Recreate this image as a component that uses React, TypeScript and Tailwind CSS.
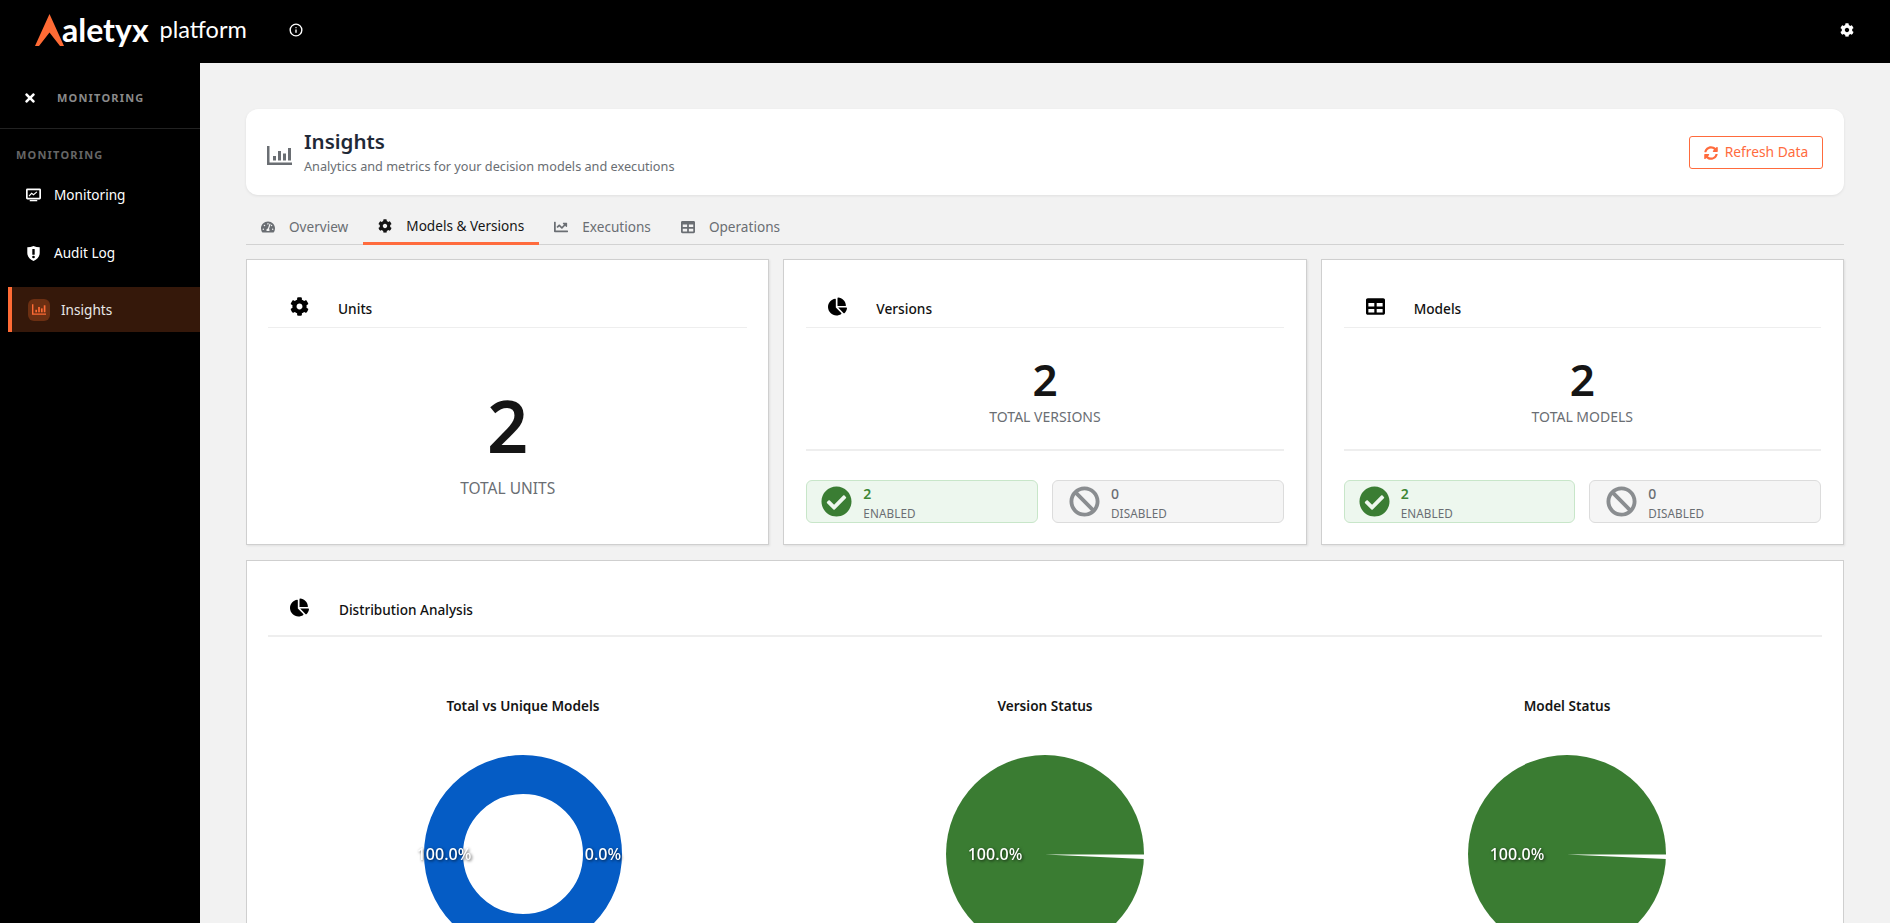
import { FaTimes, FaCog, FaTachometerAlt, FaChartLine, FaTable, FaChartPie, FaCheckCircle, FaBan, FaSyncAlt } from "react-icons/fa";
import { Info } from "lucide-react";

function BarsIcon({ className }: { className?: string }) {
  return (
    <svg viewBox="0 0 25 19" className={className} fill="currentColor">
      <path d="M0 0h2.5v16.5H25V19H0z" />
      <rect x="6" y="10" width="3" height="4.5" />
      <rect x="11" y="5" width="3" height="9.5" />
      <rect x="16" y="7.5" width="3" height="7" />
      <rect x="21" y="2" width="3" height="12.5" />
    </svg>
  );
}

function MonitorIcon({ className }: { className?: string }) {
  return (
    <svg viewBox="0 0 16 14" className={className} fill="none" stroke="currentColor">
      <rect x="0.9" y="0.9" width="14.2" height="10" rx="0.6" strokeWidth="1.8" />
      <path d="M3.2 8.2l2.8-3 2 1.5 3.6-3" strokeWidth="1.2" />
      <path d="M4 13h8" strokeWidth="1.4" />
    </svg>
  );
}

function ShieldIcon({ className }: { className?: string }) {
  return (
    <svg viewBox="0 0 13 15" className={className}>
      <path d="M0.3 1.2C2.5 1.2 4.6 0.8 6.5 0C8.4 0.8 10.5 1.2 12.7 1.2V7C12.7 10.8 10 13.6 6.5 15C3 13.6 0.3 10.8 0.3 7z" fill="currentColor" />
      <rect x="5.3" y="3" width="2.4" height="5.8" rx="0.4" fill="#000000" />
      <circle cx="6.5" cy="11" r="1.35" fill="#000000" />
    </svg>
  );
}

function LogoMark() {
  return (
    <svg viewBox="0 0 29 32" className="h-[32px] w-[29px]">
      <path d="M14.5 0L29 32H25L14.5 18.5L4 32H0z" fill="#ff6b35" />
    </svg>
  );
}

function CardHeader({ icon, title }: { icon: React.ReactNode; title: string }) {
  return (
    <div className="flex h-[46px] border-b border-[#eeeeee] pl-[22px]">
      <div className="w-[19px] pt-[15px] text-[19px] text-black">{icon}</div>
      <div className="ml-[29px] pt-[18px] text-[13.7px] leading-[18px] font-medium text-[#111111]">{title}</div>
    </div>
  );
}

function StatusCard({ value, label, enabled }: { value: number; label: string; enabled: boolean }) {
  return (
    <div
      className={
        enabled
          ? "flex h-[43px] items-center gap-[11px] rounded-md border border-[#c8e6c9] bg-[#edf7ee] pl-[14px]"
          : "flex h-[43px] items-center gap-[11px] rounded-md border border-[#dcdcdc] bg-[#f5f5f5] pl-[16px]"
      }
    >
      {enabled ? (
        <FaCheckCircle className="text-[31px] text-[#3a7d33]" />
      ) : (
        <FaBan className="text-[31px] text-[#8a8d90]" />
      )}
      <div className="flex flex-col pt-[3px]">
        <span className={enabled ? "text-[14px] leading-[18px] font-semibold text-[#3e8635]" : "text-[14px] leading-[18px] font-medium text-[#6a6e73]"}>
          {value}
        </span>
        <span className="mt-[3px] text-[11.7px] leading-[15px] tracking-[0.1px] text-[#6a6e73]">{label}</span>
      </div>
    </div>
  );
}

function SplitCard({ icon, title, label }: { icon: React.ReactNode; title: string; label: string }) {
  return (
    <div className="h-[286px] border border-[#cfcfcf] bg-white px-[22px] pt-[22px] shadow-[1px_1px_2px_rgba(0,0,0,0.08)]">
      <CardHeader icon={icon} title={title} />
      <div className="flex flex-col items-center border-b-2 border-[#eeeeee] pt-[27px] pb-[22px]">
        <div className="text-[44px] leading-[48px] font-semibold text-[#151515]">2</div>
        <div className="mt-[4px] text-[14px] leading-[20px] text-[#6a6e73]">{label}</div>
      </div>
      <div className="mt-[29px] grid grid-cols-2 gap-[14px]">
        <StatusCard value={2} label="ENABLED" enabled />
        <StatusCard value={0} label="DISABLED" enabled={false} />
      </div>
    </div>
  );
}

const TABS = [
  { label: "Overview", icon: FaTachometerAlt },
  { label: "Models & Versions", icon: FaCog, active: true },
  { label: "Executions", icon: FaChartLine },
  { label: "Operations", icon: FaTable }
];

function PieLabel({ x, children }: { x: number; children: string }) {
  return (
    <text
      x={x}
      y={105}
      textAnchor="middle"
      fill="#ffffff"
      className="text-[16px] font-medium drop-shadow-[1px_1px_1.5px_rgba(0,0,0,0.7)]"
    >
      {children}
    </text>
  );
}

function ChartColumn({ title, children }: { title: string; children: React.ReactNode }) {
  return (
    <div className="flex flex-col items-center">
      <div className="text-[13.6px] leading-[20px] font-semibold text-[#151515]">{title}</div>
      <svg viewBox="0 0 510 200" className="mt-[39px] h-[200px] w-[510px]">
        {children}
      </svg>
    </div>
  );
}

function StatusPie({ title }: { title: string }) {
  return (
    <ChartColumn title={title}>
      <circle cx="255" cy="99" r="99" fill="#3a7c32" />
      <path d="M255 99.5L354 99.5L354 104z" fill="#ffffff" />
      <PieLabel x={205}>100.0%</PieLabel>
    </ChartColumn>
  );
}

export default function App() {
  return (
    <div className="flex h-screen flex-col overflow-hidden bg-black [font-family:'Noto_Sans',sans-serif]">
      <header className="flex h-[63px] shrink-0 items-center justify-between bg-black pr-[36px] pb-[4px] pl-[35px] text-white">
        <div className="flex items-center">
          <LogoMark />
          <span className="-ml-[2px] text-[32px] leading-none font-bold [font-family:Lato,sans-serif]">aletyx</span>
          <span className="ml-[11px] text-[23.5px] leading-none font-normal [font-family:Lato,sans-serif]">platform</span>
          <Info className="ml-[42px] h-[14px] w-[14px]" strokeWidth={2.4} />
        </div>
        <FaCog className="text-[14px]" />
      </header>

      <div className="flex min-h-0 flex-1">
        <aside className="w-[200px] shrink-0 bg-black text-white">
          <div className="flex h-[66px] items-center border-b border-[#222222] pt-[5px] pl-[23px]">
            <FaTimes className="text-[14px]" />
            <span className="ml-[20px] text-[11px] font-bold tracking-[1.2px] text-[#8a8a8a]">MONITORING</span>
          </div>
          <div className="pt-[18px] pl-[16px] text-[11px] leading-[16px] font-bold tracking-[1.2px] text-[#666666]">MONITORING</div>
          <nav className="mt-[8px] flex flex-col gap-3 pl-[8px] text-[13.6px]">
            <div className="flex h-[46px] items-center pt-[2px] pl-[18px]">
              <MonitorIcon className="h-[14px] w-[15px]" />
              <span className="ml-[13px]">Monitoring</span>
            </div>
            <div className="flex h-[46px] items-center pt-[2px] pl-[19px]">
              <ShieldIcon className="h-[15px] w-[13px]" />
              <span className="ml-[14px]">Audit Log</span>
            </div>
            <div className="flex h-[45px] items-center border-l-4 border-[#ff6b35] bg-[#35180a] pl-[16px]">
              <div className="flex h-[22px] w-[22px] items-center justify-center rounded-md bg-[#6b2f12]">
                <BarsIcon className="h-[11px] w-[14px] text-[#ff6b35]" />
              </div>
              <span className="ml-[11px] pt-[2px] text-[#e8e8e8]">Insights</span>
            </div>
          </nav>
        </aside>

        <main className="min-w-0 flex-1 overflow-hidden bg-[#f2f2f2] px-[46px] pt-[46px]">
          <section className="flex h-[86px] items-center justify-between rounded-xl bg-white pr-[21px] pl-[21px] shadow-[0_1px_3px_rgba(0,0,0,0.08)]">
            <div className="flex items-center pb-[2px]">
              <BarsIcon className="mt-[8px] h-[19px] w-[25px] text-[#6a6e73]" />
              <div className="ml-[12px]">
                <h1 className="text-[20.5px] leading-[28px] font-semibold text-[#1f2937]">Insights</h1>
                <p className="mt-[1px] text-[12.7px] leading-[20px] text-[#6a6e73]">Analytics and metrics for your decision models and executions</p>
              </div>
            </div>
            <button className="flex h-[33px] w-[134px] items-center justify-center gap-[7px] rounded-[3px] border border-[#ff6b3d] pt-[1px] text-[13.8px] text-[#ff6b3d]">
              <FaSyncAlt className="text-[14px]" />
              Refresh Data
            </button>
          </section>

          <div className="mt-[13px] flex h-[37px] border-b border-[#d2d2d2] text-[13.6px]">
            {TABS.map((tab) => {
              const Icon = tab.icon;
              return (
                <div
                  key={tab.label}
                  className={
                    tab.active
                      ? "-mb-px flex items-center gap-[14px] border-b-[3px] border-[#ff6b3d] px-[15px] pt-[2px] text-[#151515]"
                      : "flex items-center gap-[14px] px-[15px] pt-[2px] text-[#6a6e73]"
                  }
                >
                  <Icon className="text-[14px]" />
                  <span>{tab.label}</span>
                </div>
              );
            })}
          </div>

          <div className="mt-[14px] grid grid-cols-3 gap-[14px]">
            <div className="h-[286px] border border-[#cfcfcf] bg-white px-[21px] pt-[22px] shadow-[1px_1px_2px_rgba(0,0,0,0.08)]">
              <CardHeader icon={<FaCog />} title="Units" />
              <div className="flex flex-col items-center pt-[61px]">
                <div className="text-[72px] leading-[72px] font-semibold text-[#151515]">2</div>
                <div className="mt-[17px] text-[15.5px] leading-[20px] text-[#6a6e73]">TOTAL UNITS</div>
              </div>
            </div>
            <SplitCard icon={<FaChartPie />} title="Versions" label="TOTAL VERSIONS" />
            <SplitCard icon={<FaTable />} title="Models" label="TOTAL MODELS" />
          </div>

          <section className="mt-[15px] h-[600px] border border-[#cfcfcf] bg-white px-[21px] pt-[22px]">
            <div className="flex h-[54px] border-b-2 border-[#eeeeee] pl-[22px]">
              <div className="w-[20px] pt-[15px] text-[19px] text-black"><FaChartPie /></div>
              <div className="ml-[29px] pt-[18px] text-[13.6px] leading-[18px] font-medium text-[#111111]">Distribution Analysis</div>
            </div>
            <div className="mt-[59px] grid grid-cols-3 gap-3">
              <ChartColumn title="Total vs Unique Models">
                <circle cx="255" cy="99" r="79.5" fill="none" stroke="#055cc5" strokeWidth="39" />
                <PieLabel x={176}>100.0%</PieLabel>
                <PieLabel x={335}>0.0%</PieLabel>
              </ChartColumn>
              <StatusPie title="Version Status" />
              <StatusPie title="Model Status" />
            </div>
          </section>
        </main>
      </div>
    </div>
  );
}
